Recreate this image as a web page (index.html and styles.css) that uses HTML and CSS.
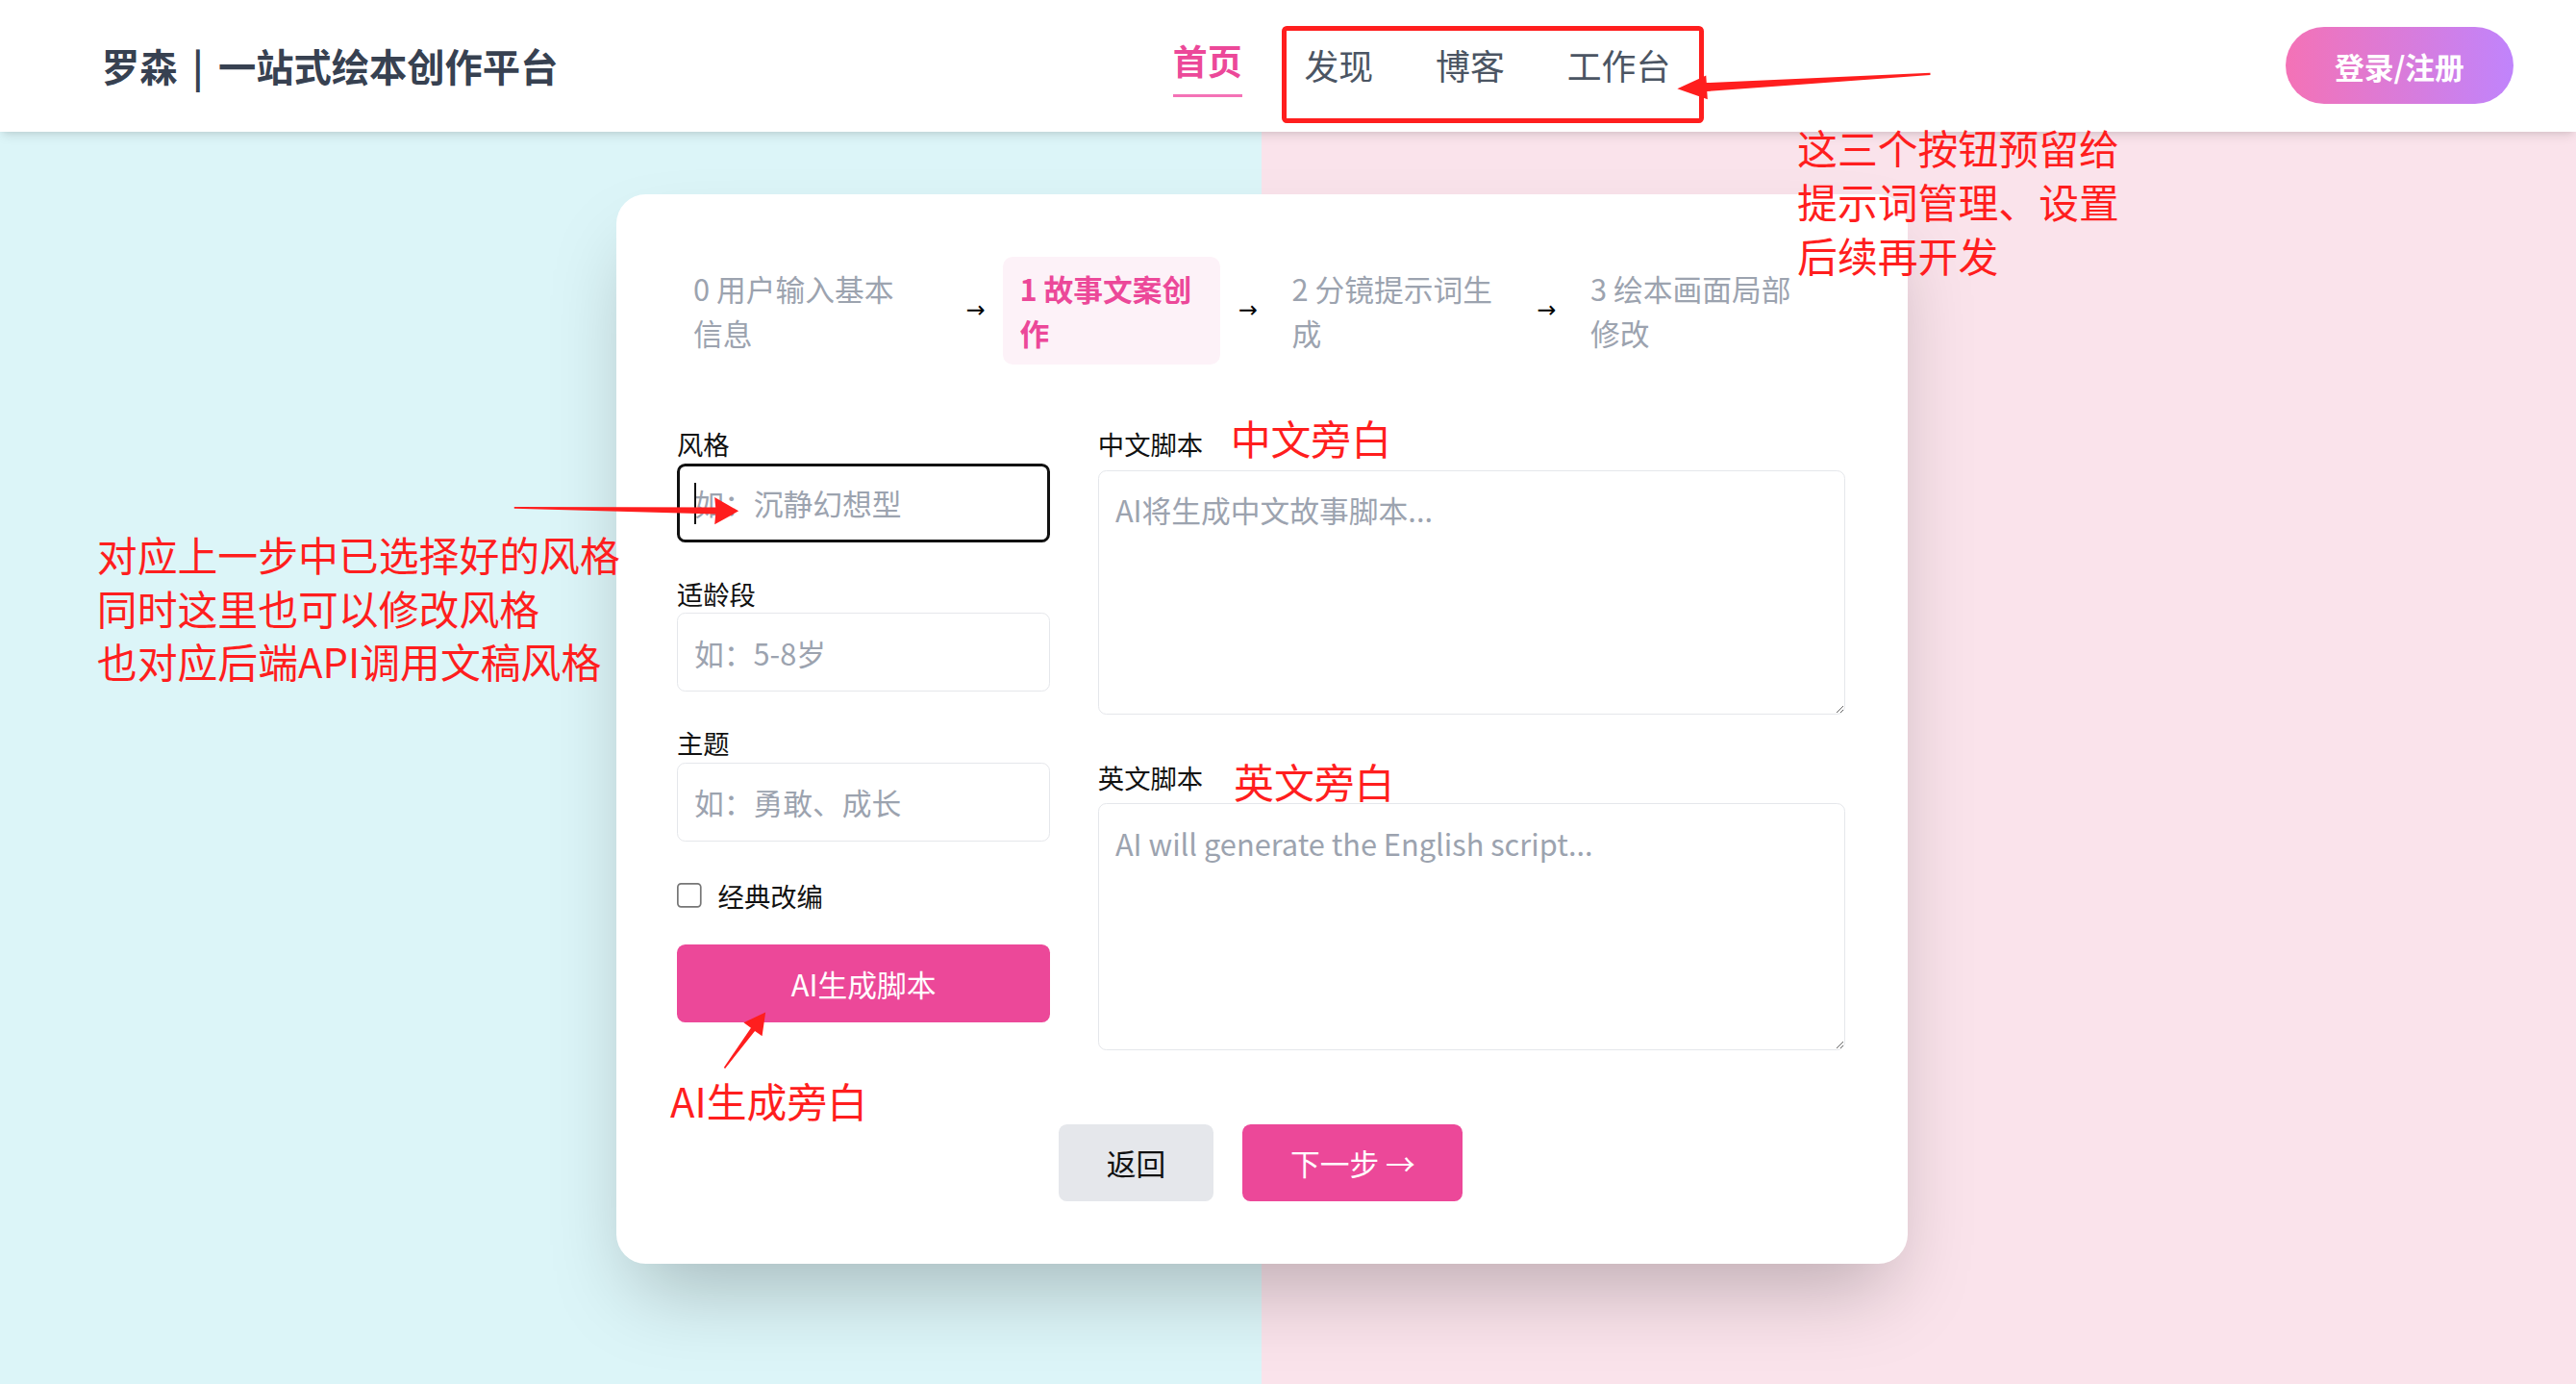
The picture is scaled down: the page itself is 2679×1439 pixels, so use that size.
FILE: index.html
```html
<!DOCTYPE html>
<html lang="zh-CN">
<head>
<meta charset="utf-8">
<title>罗森 | 一站式绘本创作平台</title>
<link rel="stylesheet" href="styles.css">
</head>
<body>
<div class="page">
  <header class="topbar">
    <div class="brand">罗森<span class="sep">|</span>一站式绘本创作平台</div>
    <nav class="nav">
      <a class="nav-item active">首页</a>
      <a class="nav-item">发现</a>
      <a class="nav-item">博客</a>
      <a class="nav-item">工作台</a>
    </nav>
    <button class="login">登录/注册</button>
  </header>

  <main class="main">
    <section class="card">
      <div class="steps">
        <div class="step step-0">0 用户输入基本信息</div>
        <span class="step-arrow arrow-first">→</span>
        <div class="step step-1 active">1 故事文案创作</div>
        <span class="step-arrow">→</span>
        <div class="step step-2">2 分镜提示词生成</div>
        <span class="step-arrow">→</span>
        <div class="step step-3">3 绘本画面局部修改</div>
      </div>

      <div class="form-grid">
        <div class="col-left">
          <div class="field">
            <label class="label">风格</label>
            <span class="input-wrap focused"><input class="input" type="text" placeholder="如：沉静幻想型"></span>
          </div>
          <div class="field">
            <label class="label">适龄段</label>
            <span class="input-wrap"><input class="input" type="text" placeholder="如：5-8岁"></span>
          </div>
          <div class="field">
            <label class="label">主题</label>
            <span class="input-wrap"><input class="input" type="text" placeholder="如：勇敢、成长"></span>
          </div>
          <label class="check"><input class="checkbox" type="checkbox"><span>经典改编</span></label>
          <button class="btn btn-primary btn-generate">AI生成脚本</button>
        </div>

        <div class="col-right">
          <div class="field-r">
            <label class="label">中文脚本</label>
            <textarea class="textarea ta-cn" placeholder="AI将生成中文故事脚本..."></textarea>
          </div>
          <div class="field-r">
            <label class="label">英文脚本</label>
            <textarea class="textarea ta-en" placeholder="AI will generate the English script..."></textarea>
          </div>
        </div>
      </div>

      <div class="actions">
        <button class="btn btn-secondary">返回</button>
        <button class="btn btn-primary btn-next">下一步 →</button>
      </div>
    </section>
  </main>

  <div class="annotations">
    <div class="nav-box"></div>
    <div class="note note-nav">这三个按钮预留给<br>提示词管理、设置<br>后续再开发</div>
    <div class="note note-style">对应上一步中已选择好的风格<br>同时这里也可以修改风格<br>也对应后端API调用文稿风格</div>
    <div class="note note-cn">中文旁白</div>
    <div class="note note-en">英文旁白</div>
    <div class="note note-ai">AI生成旁白</div>
    <svg class="arrows" viewBox="0 0 1568 842" xmlns="http://www.w3.org/2000/svg">
      <polygon fill="#ff1e1e" points="1175,44.4 1038.8,50.4 1038.5,46 1021,54 1039.4,60.5 1039.1,55.6 1175,45.6"/>
      <polygon fill="#ff1e1e" points="313,308.5 435.6,308.8 435,302.6 449.6,311 435,319.2 435.6,312.9 313,309.5"/>
      <polygon fill="#ff1e1e" points="440.6,649.7 457.1,625.6 452.7,622.4 466,616 463.9,630.6 459.5,627.4 441.4,650.3"/>
    </svg>
  </div>
</div>
</body>
</html>
```

FILE: styles.css
```css
html {
  zoom: 1.7085;
  overflow: hidden;
}

* {
  box-sizing: border-box;
}

body {
  margin: 0;
  font-family: "Noto Sans CJK SC", "Noto Sans", sans-serif;
  color: #111;
  background: #fae3eb;
}

.page {
  position: relative;
  height: 843px;
  overflow: hidden;
  background: linear-gradient(to right, #dcf5f8 0, #dcf5f8 768px, #fae3eb 768px, #fae3eb 100%);
}

/* ---------- header ---------- */
.topbar {
  position: relative;
  z-index: 1;
  height: 80px;
  display: flex;
  align-items: center;
  justify-content: space-between;
  padding: 0 38px 0 62px;
  background: #fff;
  box-shadow: 0 4px 6px -1px rgba(0, 0, 0, 0.1), 0 2px 4px -2px rgba(0, 0, 0, 0.1);
}

.brand {
  font-size: 23px;
  line-height: 33px;
  font-weight: 700;
  color: #374151;
  white-space: nowrap;
}

.brand .sep {
  margin: 0 9px;
}

.nav {
  display: flex;
  align-items: center;
  gap: 38px;
}

.nav-item {
  font-size: 21px;
  line-height: 31.5px;
  color: #4b5563;
  text-decoration: none;
  white-space: nowrap;
}

.nav-item.active {
  color: #ec4899;
  font-weight: 600;
  padding-bottom: 5px;
  border-bottom: 2px solid #f472b6;
}

.login {
  height: 47px;
  padding: 0 30px;
  border: 0;
  border-radius: 999px;
  background: linear-gradient(to right, #f472b6, #c084fc);
  color: #fff;
  font-family: inherit;
  font-size: 18px;
  font-weight: 700;
  white-space: nowrap;
}

/* ---------- card ---------- */
.main {
  width: 1536px;
  padding-top: 38px;
}

.card {
  width: 786px;
  margin: 0 auto;
  padding: 38px 38px 38px 37px;
  background: #fff;
  border-radius: 18px;
  box-shadow: 0 25px 50px -12px rgba(0, 0, 0, 0.25);
}

/* ---------- steps ---------- */
.steps {
  display: flex;
  align-items: center;
  margin-bottom: 38px;
}

.step {
  flex: none;
  padding: 6px 10px;
  font-size: 18px;
  line-height: 27px;
  color: #9ca3af;
  border-radius: 6px;
}

.step-0 { width: 155px; }
.step-1 { width: 132px; }
.step-2 { width: 148px; }
.step-3 { width: 155px; }

.step.active {
  background: #fdf2f8;
  color: #ec4899;
  font-weight: 700;
}

.step-arrow {
  flex: none;
  margin: 0 11px;
  font-family: "DejaVu Sans", sans-serif;
  font-size: 14px;
  line-height: 1;
  color: #000;
}

.step-arrow.arrow-first {
  margin-left: 21px;
}

/* ---------- form ---------- */
.form-grid {
  display: grid;
  grid-template-columns: 1fr 2fr;
  column-gap: 29px;
  align-items: start;
}

.label {
  display: block;
  font-size: 16px;
  line-height: 20px;
  color: #111;
}

.field {
  margin-bottom: 21px;
}

.field .label {
  margin-bottom: 2px;
}

.input-wrap {
  position: relative;
  display: block;
}

.input {
  display: block;
  width: 100%;
  height: 48px;
  padding: 0 10px;
  border: 1px solid #e5e7eb;
  border-radius: 5px;
  background: #fff;
  font-family: inherit;
  font-size: 18px;
  color: #111;
  outline: none;
}

.input::placeholder,
.textarea::placeholder {
  color: #9ca3af;
}

.input-wrap.focused .input {
  border: 2px solid #111;
  padding: 0 9px;
}

.input-wrap.focused::after {
  content: "";
  position: absolute;
  left: 10.5px;
  top: 12px;
  width: 1px;
  height: 25px;
  background: #111;
}

.check {
  display: flex;
  align-items: center;
  gap: 10px;
  height: 24px;
  margin-bottom: 18px;
  font-size: 16px;
  color: #111;
}

.checkbox {
  width: 15px;
  height: 15px;
  margin: 0;
}

.btn {
  height: 47px;
  border: 0;
  border-radius: 5px;
  font-family: inherit;
  font-size: 18px;
  white-space: nowrap;
}

.btn-primary {
  background: #ec4899;
  color: #fff;
}

.btn-generate {
  display: block;
  width: 100%;
}

.field-r .label {
  margin-bottom: 6px;
}

.field-r + .field-r {
  margin-top: 28px;
}

.textarea {
  display: block;
  width: 100%;
  padding: 10px;
  border: 1px solid #e5e7eb;
  border-radius: 5px;
  background: #fff;
  font-family: inherit;
  font-size: 18px;
  line-height: 27px;
  color: #111;
  outline: none;
  resize: vertical;
}

.ta-cn { height: 149px; }
.ta-en { height: 150px; }

.actions {
  display: flex;
  justify-content: center;
  gap: 18px;
  margin-top: 45px;
}

.btn-secondary {
  padding: 0 29px;
  background: #e5e7eb;
  color: #111;
}

.btn-next {
  padding: 0 29px;
}

/* ---------- annotation layer (drawn over the UI) ---------- */
.annotations {
  position: absolute;
  left: 0;
  top: 0;
  width: 1568px;
  height: 842px;
  z-index: 2;
  pointer-events: none;
}

.nav-box {
  position: absolute;
  left: 780px;
  top: 16px;
  width: 257px;
  height: 59px;
  border: 3px solid #ff1e1e;
  border-radius: 3px;
}

.note {
  position: absolute;
  color: #ff1e1e;
  font-size: 24.5px;
  line-height: 33px;
  white-space: nowrap;
}

.note-nav { left: 1094px; top: 73px; }
.note-style { left: 59px; top: 321px; line-height: 32.5px; }
.note-cn { left: 749px; top: 250px; }
.note-en { left: 751px; top: 459px; }
.note-ai { left: 408px; top: 653px; }

.arrows {
  position: absolute;
  left: 0;
  top: 0;
  width: 1568px;
  height: 842px;
}
```
